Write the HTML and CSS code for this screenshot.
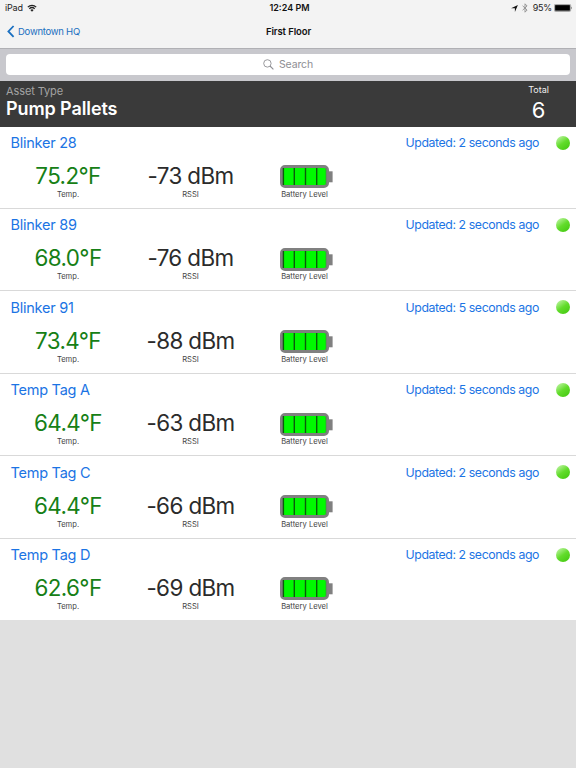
FILE: index.html
```html
<!DOCTYPE html>
<html lang="en">
<head>
    <meta charset="UTF-8">
    <meta name="viewport" content="width=device-width, initial-scale=1.0">
    <title>First Floor</title>
    <link rel="stylesheet" href="styles.css">
</head>
<body>

    <svg class="defs">
        <symbol id="battery" viewBox="0 0 53 24">
            <rect x="48" y="6.3" width="4.6" height="11" fill="#808080"/>
            <rect x="1.5" y="1.5" width="46" height="20" rx="3.5" fill="#00fa00" stroke="#808080" stroke-width="3"/>
            <path d="M3.4 3v17M14.3 3v17M25.5 3v17M36.7 3v17" stroke="#0b5a0b" stroke-width="1.4"/>
            <path d="M46 3v17" stroke="#3a8a3a" stroke-width="0.6"/>
        </symbol>
    </svg>

    <div class="status">
        <div class="device">
            <span>iPad</span>
            <svg class="wifi" viewBox="0 0 10 8">
                <path d="M0.8 3.1a6 6 0 0 1 8.4 0M2.3 4.8a3.9 3.9 0 0 1 5.4 0" fill="none" stroke="#222" stroke-width="1.2"/>
                <path d="M5 7.8L3.4 6.1a2.3 2.3 0 0 1 3.2 0z" fill="#222"/>
            </svg>
        </div>
        <div class="clock">12:24 PM</div>
        <div class="power">
            <svg class="arrow" viewBox="0 0 7 7"><path d="M6.9 0.1L3.9 6.9V3.3H0.1z" fill="#111"/></svg>
            <svg class="bluetooth" viewBox="0 0 6 10"><path d="M0.6 2.8l4.5 4.2L3 9.2V0.8L5.1 3 0.6 7.2" fill="none" stroke="#909090" stroke-width="0.9"/></svg>
            <span>95%</span>
            <svg class="cell" viewBox="0 0 19 8">
                <rect x="0.4" y="0.4" width="16.2" height="7" rx="1" fill="#fff" stroke="#777" stroke-width="0.7"/>
                <rect x="1.1" y="1.1" width="14.8" height="5.6" fill="#000"/>
                <path d="M17.3 2.5q1.2 1.4 0 2.8z" fill="#222"/>
            </svg>
        </div>
    </div>

    <div class="navbar">
        <a class="back">
            <svg class="chevron" viewBox="0 0 8 13"><path d="M6.6 1L1.4 6.4l5.2 5.4" fill="none" stroke="#1a6fc0" stroke-width="1.8"/></svg>
            <span>Downtown HQ</span>
        </a>
        <div class="title">First Floor</div>
    </div>

    <div class="searchbar">
        <div class="search">
            <svg class="glass" viewBox="0 0 11 11"><circle cx="4.4" cy="4.4" r="3.7" fill="none" stroke="#8e8e93" stroke-width="0.9"/><path d="M7 7l3.4 3.4" stroke="#8e8e93" stroke-width="1.1"/></svg>
            <span>Search</span>
        </div>
    </div>

    <div class="header">
        <div class="asset">
            <div class="label">Asset Type</div>
            <div class="type">Pump Pallets</div>
        </div>
        <div class="total">
            <div class="caption">Total</div>
            <div class="count">6</div>
        </div>
    </div>

    <div class="list">
        <div class="row">
            <div class="top"><span class="name">Blinker 28</span><span class="updated">Updated: 2 seconds ago</span><span class="dot"></span></div>
            <div class="values">
                <div class="item"><div class="temp">75.2°F</div><div class="small">Temp.</div></div>
                <div class="item"><div class="rssi">-73 dBm</div><div class="small">RSSI</div></div>
                <div class="item"><svg class="battery"><use href="#battery"/></svg><div class="small">Battery Level</div></div>
            </div>
        </div>
        <div class="row">
            <div class="top"><span class="name">Blinker 89</span><span class="updated">Updated: 2 seconds ago</span><span class="dot"></span></div>
            <div class="values">
                <div class="item"><div class="temp">68.0°F</div><div class="small">Temp.</div></div>
                <div class="item"><div class="rssi">-76 dBm</div><div class="small">RSSI</div></div>
                <div class="item"><svg class="battery"><use href="#battery"/></svg><div class="small">Battery Level</div></div>
            </div>
        </div>
        <div class="row">
            <div class="top"><span class="name">Blinker 91</span><span class="updated">Updated: 5 seconds ago</span><span class="dot"></span></div>
            <div class="values">
                <div class="item"><div class="temp">73.4°F</div><div class="small">Temp.</div></div>
                <div class="item"><div class="rssi">-88 dBm</div><div class="small">RSSI</div></div>
                <div class="item"><svg class="battery"><use href="#battery"/></svg><div class="small">Battery Level</div></div>
            </div>
        </div>
        <div class="row">
            <div class="top"><span class="name">Temp Tag A</span><span class="updated">Updated: 5 seconds ago</span><span class="dot"></span></div>
            <div class="values">
                <div class="item"><div class="temp">64.4°F</div><div class="small">Temp.</div></div>
                <div class="item"><div class="rssi">-63 dBm</div><div class="small">RSSI</div></div>
                <div class="item"><svg class="battery"><use href="#battery"/></svg><div class="small">Battery Level</div></div>
            </div>
        </div>
        <div class="row">
            <div class="top"><span class="name">Temp Tag C</span><span class="updated">Updated: 2 seconds ago</span><span class="dot"></span></div>
            <div class="values">
                <div class="item"><div class="temp">64.4°F</div><div class="small">Temp.</div></div>
                <div class="item"><div class="rssi">-66 dBm</div><div class="small">RSSI</div></div>
                <div class="item"><svg class="battery"><use href="#battery"/></svg><div class="small">Battery Level</div></div>
            </div>
        </div>
        <div class="row">
            <div class="top"><span class="name">Temp Tag D</span><span class="updated">Updated: 2 seconds ago</span><span class="dot"></span></div>
            <div class="values">
                <div class="item"><div class="temp">62.6°F</div><div class="small">Temp.</div></div>
                <div class="item"><div class="rssi">-69 dBm</div><div class="small">RSSI</div></div>
                <div class="item"><svg class="battery"><use href="#battery"/></svg><div class="small">Battery Level</div></div>
            </div>
        </div>
    </div>

</body>
</html>
```
FILE: styles.css
```css
*{
    box-sizing: border-box;
}
body{
    margin:0;
    min-height:100vh;
    background-color: #e0e0e0;
    font-family: Inter, "Liberation Sans", sans-serif;
    color:#222;
}
svg{
    display: block;
    flex:none;
}
.defs{
    width:0;
    height:0;
}
.status{
    height:16px;
    padding:0 4px 0 5px;
    background-color: #f3f3f3;
    display: grid;
    grid-template-columns: 1fr auto 1fr;
    align-items: center;
    font-size: 9px;
    line-height: 16px;
}
.device,.power{
    display: flex;
    align-items: center;
}
.device{
    gap:4px;
    letter-spacing: -0.2px;
}
.wifi{
    width:10px;
    height:8px;
}
.clock{
    padding-left:2px;
    font-weight: 600;
    color:#111;
}
.power{
    justify-content: flex-end;
    letter-spacing: -0.2px;
}
.arrow{
    width:7px;
    height:7px;
    margin-right:4px;
}
.bluetooth{
    width:6px;
    height:10px;
    margin-right:5px;
}
.cell{
    width:19px;
    height:8px;
    margin:0 -1px 0 2px;
}
.navbar{
    height:33px;
    padding:0 7px;
    background-color: #f3f3f3;
    border-bottom: 1px solid #b0b0b4;
    display: grid;
    grid-template-columns: 1fr auto 1fr;
    font-size: 9.5px;
    line-height: 31px;
}
.back{
    display: flex;
    align-items: center;
    gap:3px;
    height:31px;
    letter-spacing: -0.25px;
    color:#1a6fc0;
}
.chevron{
    width:8px;
    height:13px;
}
.title{
    padding-left:1px;
    font-weight: 600;
    letter-spacing: -0.1px;
    color:#111;
}
.searchbar{
    height:32px;
    padding:5px 6px 6px;
    background-color: #c8c8cd;
}
.search{
    height:21px;
    border-radius: 4px;
    background-color: white;
    display: flex;
    align-items: center;
    justify-content: center;
    gap:5px;
    font-size: 10.5px;
    letter-spacing: -0.1px;
    color:#8e8e93;
}
.glass{
    width:11px;
    height:11px;
}
.header{
    height:45.6px;
    padding:3px 27px 0 6px;
    background-color: #3a3a3a;
    display: flex;
    justify-content: space-between;
    color:white;
}
.label{
    font-size: 11px;
    line-height: 14px;
    letter-spacing: -0.1px;
    color:#a3a3a3;
}
.type{
    font-size: 18px;
    line-height: 21px;
    font-weight: 600;
    letter-spacing: -0.1px;
}
.total{
    text-align: center;
}
.caption{
    font-size: 9px;
    line-height: 11px;
    color:#eee;
}
.count{
    font-size: 22px;
    line-height: 30px;
}
.row{
    height:82.4px;
    padding-top:7px;
    background-color: white;
    border-bottom: 1px solid #d9d9d9;
}
.row:last-child{
    height:81.9px;
    border-bottom: none;
}
.top{
    height:18px;
    padding:0 6px 0 10.5px;
    display: flex;
    align-items: center;
    color:#1b74e4;
}
.name{
    flex:1;
    font-size: 14.5px;
    letter-spacing: -0.25px;
}
.updated{
    font-size: 12.3px;
    letter-spacing: -0.4px;
}
.dot{
    width:14px;
    height:14px;
    margin-left:17px;
    border-radius: 50%;
    background: linear-gradient(145deg, #c2f5a8 5%, #62dc2b 50%, #43c810 95%);
}
.values{
    padding:0.4px 0 0 7px;
    display: grid;
    grid-template-columns: 122px 123px 105px;
}
.item{
    text-align: center;
}
.temp,.rssi{
    height:36px;
    font-size: 22.4px;
    line-height: 47px;
    letter-spacing: -0.6px;
}
.temp{
    color:#168016;
}
.rssi{
    color:#2b2b2b;
}
.battery{
    width:53px;
    height:24px;
    margin:13.5px 0 0 27.7px;
}
.small{
    font-size: 7.6px;
    line-height: 11px;
    color:#444;
}
.battery + .small{
    margin-top:-0.5px;
}
.temp + .small,.rssi + .small{
    margin-top:1px;
}
```
